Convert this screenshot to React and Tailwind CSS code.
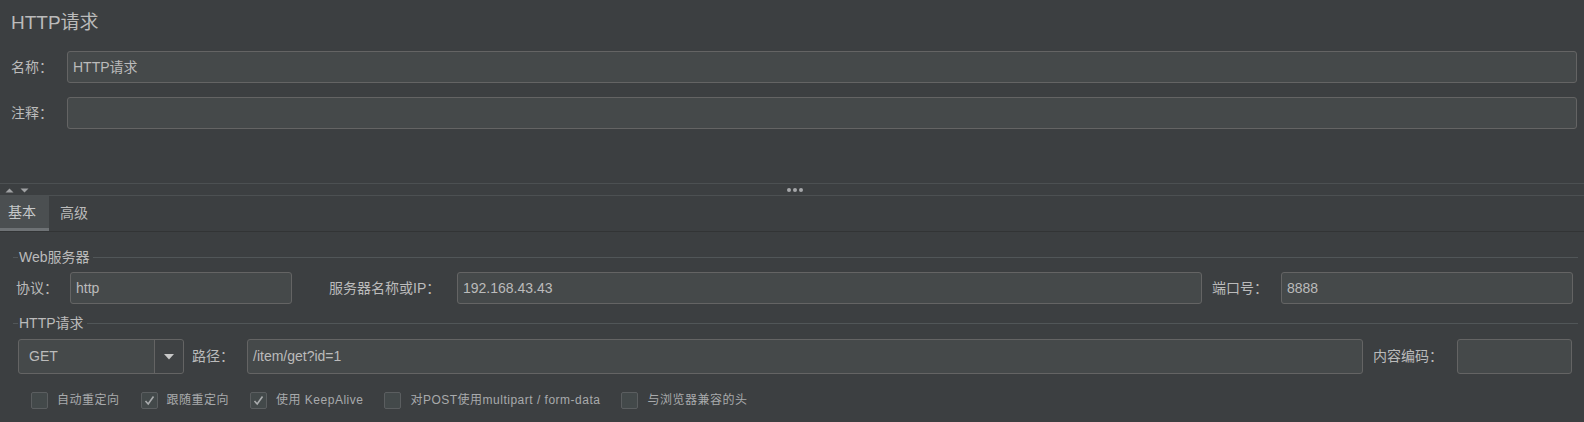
import React from 'react';

const font = { fontFamily: '"Liberation Sans", "Noto Sans CJK SC", sans-serif' };

const Input = ({ value = '', className = '' }) => (
  <div
    className={`h-[32px] shrink-0 rounded-[3px] border border-[#646464] bg-[#45494a] flex items-center px-[5px] text-[14px] text-[#bbbbbb] whitespace-nowrap ${className}`}
  >
    {value}
  </div>
);

const Label = ({ children, className = '' }) => (
  <span className={`shrink-0 whitespace-nowrap text-[14px] text-[#bbbbbb] ${className}`}>{children}</span>
);

const Check = ({ checked, label }) => (
  <div className="flex items-center shrink-0">
    <div className="w-[17px] h-[17px] rounded-[2px] border border-[#5b5e60] bg-[#43494a] flex items-center justify-center">
      {checked && (
        <svg width="13" height="13" viewBox="0 0 13 13">
          <polyline points="2.5,7 5.2,10 10.5,2.5" fill="none" stroke="#a9abad" strokeWidth="1.6" />
        </svg>
      )}
    </div>
    <span className="ml-[9px] text-[12px] tracking-[0.5px] text-[#a8aaac] whitespace-nowrap">{label}</span>
  </div>
);

const Group = ({ title, children }) => (
  <div>
    <div className="flex items-center h-[16px] ml-[13px] mr-[6px]">
      <div className="w-[5px] h-px bg-[#515658]" />
      <span className="px-[1px] text-[14px] text-[#bbbbbb] leading-[16px]">{title}</span>
      <div className="flex-1 h-px bg-[#515658] ml-[2px]" />
    </div>
    {children}
  </div>
);

export default function App() {
  return (
    <div style={font} className="w-[1584px] h-[422px] bg-[#3c3f41] overflow-hidden text-[#bbbbbb]">
      {/* top pane */}
      <div className="h-[183px]">
        <div className="pl-[11px] pt-[11px] h-[51px] text-[19px] leading-[24px] text-[#bbbbbb]">HTTP请求</div>
        <div className="flex items-center">
          <Label className="w-[67px] pl-[11px]">名称：</Label>
          <Input value="HTTP请求" className="flex-1 mr-[7px]" />
        </div>
        <div className="flex items-center mt-[14px]">
          <Label className="w-[67px] pl-[11px]">注释：</Label>
          <Input className="flex-1 mr-[7px]" />
        </div>
      </div>

      {/* splitter */}
      <div className="h-[13px] border-t border-b border-[#4c5052] flex items-center">
        <svg width="30" height="11" viewBox="0 0 30 11" className="ml-[3px]">
          <polygon points="2.5,8.5 6.5,4.5 10.5,8.5" fill="#a0a2a4" />
          <polygon points="17.5,4.5 25.5,4.5 21.5,8.5" fill="#a0a2a4" />
        </svg>
        <div className="flex gap-[2px] ml-[754px]">
          <div className="w-[4px] h-[4px] rounded-full bg-[#a5a7a9]" />
          <div className="w-[4px] h-[4px] rounded-full bg-[#a5a7a9]" />
          <div className="w-[4px] h-[4px] rounded-full bg-[#a5a7a9]" />
        </div>
      </div>

      {/* tabs */}
      <div className="h-[36px] flex border-b border-[#323435]">
        <div className="w-[49px] bg-[#4b4f51] border-b-[3px] border-[#6e7275] flex items-center pl-[8px] text-[14px] text-[#c6c8ca]">
          基本
        </div>
        <div className="flex items-center pl-[11px] text-[14px]">高级</div>
      </div>

      {/* content */}
      <div className="pt-[17px]">
        <Group title="Web服务器">
          <div className="flex items-center mt-[7px]">
            <Label className="w-[70px] pl-[16px]">协议：</Label>
            <Input value="http" className="w-[222px]" />
            <Label className="ml-[37px] w-[128px]">服务器名称或IP：</Label>
            <Input value="192.168.43.43" className="flex-1" />
            <Label className="ml-[10px] w-[69px]">端口号：</Label>
            <Input value="8888" className="w-[292px] mr-[11px]" />
          </div>
        </Group>

        <div className="mt-[11px]">
          <Group title="HTTP请求">
            <div className="flex items-center mt-[8px]">
              <div className="ml-[18px] w-[166px] h-[35px] shrink-0 rounded-[3px] border border-[#646464] bg-[#45494a] flex">
                <div className="flex-1 flex items-center pl-[10px] text-[14px]">GET</div>
                <div className="w-[29px] border-l border-[#646464] bg-[#3f4244] flex items-center justify-center rounded-r-[3px]">
                  <svg width="10" height="6" viewBox="0 0 10 6">
                    <polygon points="0,0 10,0 5,5.5" fill="#c8c8c8" />
                  </svg>
                </div>
              </div>
              <Label className="ml-[8px] w-[55px]">路径：</Label>
              <Input value="/item/get?id=1" className="flex-1 h-[35px]" />
              <Label className="ml-[10px] w-[84px]">内容编码：</Label>
              <Input className="w-[115px] h-[35px] mr-[12px]" />
            </div>
          </Group>
        </div>

        <div className="flex items-center mt-[14px] ml-[31px] h-[24px]">
          <Check label="自动重定向" />
          <div className="ml-[21px]"><Check checked label="跟随重定向" /></div>
          <div className="ml-[21px]"><Check checked label="使用 KeepAlive" /></div>
          <div className="ml-[21px]"><Check label="对POST使用multipart / form-data" /></div>
          <div className="ml-[21px]"><Check label="与浏览器兼容的头" /></div>
        </div>
      </div>
    </div>
  );
}
